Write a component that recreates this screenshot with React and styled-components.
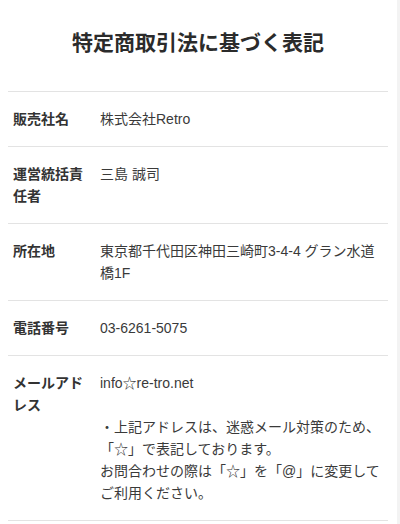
import React from 'react'
import styled, { createGlobalStyle } from 'styled-components'

const GlobalStyle = createGlobalStyle`
  html {
    background: #fff;
    box-shadow: inset -3px 0 0 #f3f3f3;
    min-height: 100%;
  }
  body {
    margin: 0;
    font-family: "Liberation Sans", "Noto Sans CJK JP", sans-serif;
    color: #333;
  }
`

const Page = styled.div`
  width: 380px;
  margin-left: 8px;
  padding-top: 25px;
`

const Title = styled.h1`
  margin: 0 0 30px;
  height: 36px;
  font-size: 21px;
  font-weight: 700;
  line-height: 36px;
  text-align: center;
  color: #2b2b2b;
`

const Table = styled.table`
  width: 100%;
  table-layout: fixed;
  border-collapse: collapse;
  font-size: 14px;
  line-height: 22px;
`

const Row = styled.tr`
  border-top: 1px solid #e3e3e3;
  border-bottom: 1px solid #e3e3e3;
`

const Label = styled.th`
  padding: 16px 5px;
  font-weight: 700;
  text-align: left;
  vertical-align: top;
  color: #333;
`

const Value = styled.td`
  padding: 16px 3px 16px 5px;
  vertical-align: top;
  color: #3a3a3a;
`

const rows = [
  { label: '販売社名', value: ['株式会社Retro'] },
  { label: '運営統括責任者', value: ['三島 誠司'] },
  { label: '所在地', value: ['東京都千代田区神田三崎町3-4-4 グラン水道橋1F'] },
  { label: '電話番号', value: ['03-6261-5075'] },
  {
    label: 'メールアドレス',
    value: [
      'info☆re-tro.net',
      '',
      '・上記アドレスは、迷惑メール対策のため、「☆」で表記しております。',
      'お問合わせの際は「☆」を「@」に変更してご利用ください。',
    ],
  },
]

const App = () => (
  <Page>
    <GlobalStyle />
    <Title>特定商取引法に基づく表記</Title>
    <Table>
      <colgroup>
        <col style={{ width: 87 }} />
        <col />
      </colgroup>
      <tbody>
        {rows.map(row => (
          <Row key={row.label}>
            <Label>{row.label}</Label>
            <Value>
              {row.value.map((line, i) => (
                <React.Fragment key={i}>
                  {i > 0 && <br />}
                  {line}
                </React.Fragment>
              ))}
            </Value>
          </Row>
        ))}
      </tbody>
    </Table>
  </Page>
)

export default App
